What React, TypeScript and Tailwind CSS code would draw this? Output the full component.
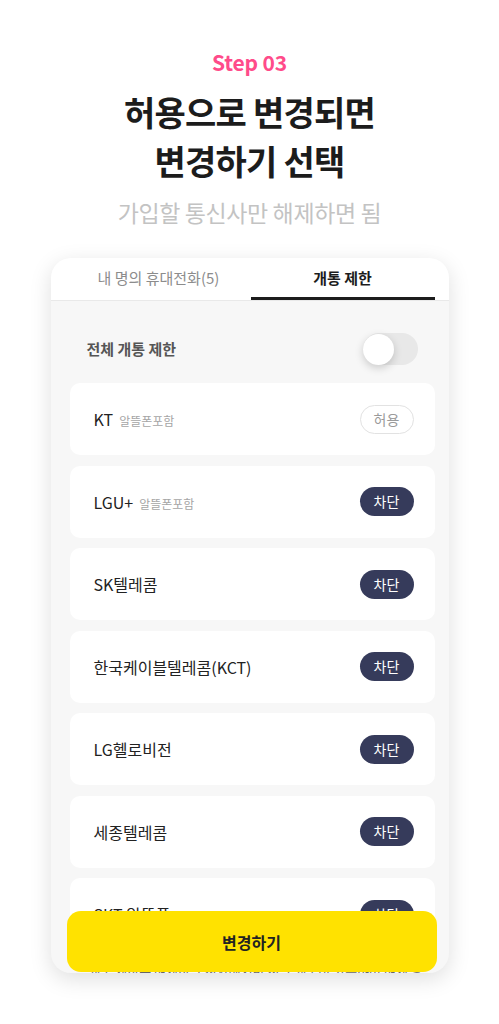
import React, { useState } from 'react';

type Carrier = {
    name: string;
    note?: string;
    allowed: boolean;
};

const carriers: Carrier[] = [
    { name: 'KT', note: '알뜰폰포함', allowed: true },
    { name: 'LGU+', note: '알뜰폰포함', allowed: false },
    { name: 'SK텔레콤', allowed: false },
    { name: '한국케이블텔레콤(KCT)', allowed: false },
    { name: 'LG헬로비전', allowed: false },
    { name: '세종텔레콤', allowed: false },
    { name: 'SKT 알뜰폰', allowed: false },
];

const StatusBadge = ({ allowed }: { allowed: boolean }) =>
    allowed ? (
        <span className="flex h-[29px] w-[54px] items-center justify-center rounded-full border border-[#e2e2e2] bg-white text-[14px] text-[#9a9a9a]">
            허용
        </span>
    ) : (
        <span className="flex h-[29px] w-[54px] items-center justify-center rounded-full bg-[#363b5b] text-[14px] text-white">
            차단
        </span>
    );

const App: React.FC = () => {
    const [allBlocked, setAllBlocked] = useState(false);
    const [tab, setTab] = useState(1);

    return (
        <div
            className="flex min-h-screen flex-col items-center bg-white"
            style={{ fontFamily: '"Noto Sans CJK KR", "Noto Sans", sans-serif' }}
        >
            <p className="mt-[49px] text-[21px] font-bold leading-[26px] tracking-[-0.2px] text-[#ff4b8a]">Step 03</p>
            <h1 className="mt-[12px] text-center text-[34px] font-bold leading-[49px] tracking-[-0.8px] text-[#1c1c1c]">
                허용으로 변경되면
                <br />
                변경하기 선택
            </h1>
            <p className="mt-[12px] text-[23px] leading-[30px] tracking-[-0.4px] text-[#c3c3c3]">가입할 통신사만 해제하면 됨</p>

            <div className="relative mt-[31px] h-[715px] w-[398px] overflow-hidden rounded-[20px] bg-[#f7f7f7] shadow-[0_6px_22px_rgba(0,0,0,0.13)]">
                {/* tabs */}
                <div className="flex h-[43px] border-b border-[#e9e9e9] bg-white pl-4 pr-[14px]">
                    {['내 명의 휴대전화(5)', '개통 제한'].map((label, i) => (
                        <button
                            key={label}
                            onClick={() => setTab(i)}
                            className={`flex flex-1 items-center justify-center border-b-[3px] pt-[2px] text-[15px] ${
                                tab === i ? 'border-[#1c1c1c] font-bold text-[#1c1c1c]' : 'border-transparent text-[#8c8c8c]'
                            }`}
                        >
                            {label}
                        </button>
                    ))}
                </div>

                <div className="pl-[19px] pr-[14px] pt-[32px]">
                    <div className="flex h-[32px] items-center justify-between pl-[17px] pr-[17px]">
                        <span className="text-[15px] font-bold text-[#555555]">전체 개통 제한</span>
                        <button
                            onClick={() => setAllBlocked(!allBlocked)}
                            className={`flex h-[32px] w-[55px] items-center rounded-full ${
                                allBlocked ? 'justify-end bg-[#363b5b]' : 'justify-start bg-[#e8e8e8]'
                            }`}
                        >
                            <span className="h-[31px] w-[31px] rounded-full bg-white shadow-[0_3px_8px_rgba(0,0,0,0.18)]" />
                        </button>
                    </div>

                    <ul className="mt-[18px] flex flex-col gap-[10.5px]">
                        {carriers.map((c) => (
                            <li
                                key={c.name}
                                className="flex h-[72px] items-center justify-between rounded-[10px] bg-white pl-6 pr-[21px]"
                            >
                                <span className="flex items-baseline">
                                    <span className="text-[16px] text-[#222222]">{c.name}</span>
                                    {c.note && <span className="ml-[6px] text-[12px] text-[#a5a5a5]">{c.note}</span>}
                                </span>
                                <StatusBadge allowed={c.allowed} />
                            </li>
                        ))}
                    </ul>
                    <p className="mt-[12px] px-[10px] text-[13px] text-[#666666]">
                        * 개통 제한을 해제한 통신사에서만 신규 개통이 가능하며 해제 후 즉시 적용됩니다.
                    </p>
                </div>

                <button className="absolute bottom-[1px] left-4 right-3 flex h-[61px] items-center justify-center rounded-[14px] bg-[#ffe200] text-[16px] font-bold text-[#222222]">
                    변경하기
                </button>
            </div>
        </div>
    );
};

export default App;
